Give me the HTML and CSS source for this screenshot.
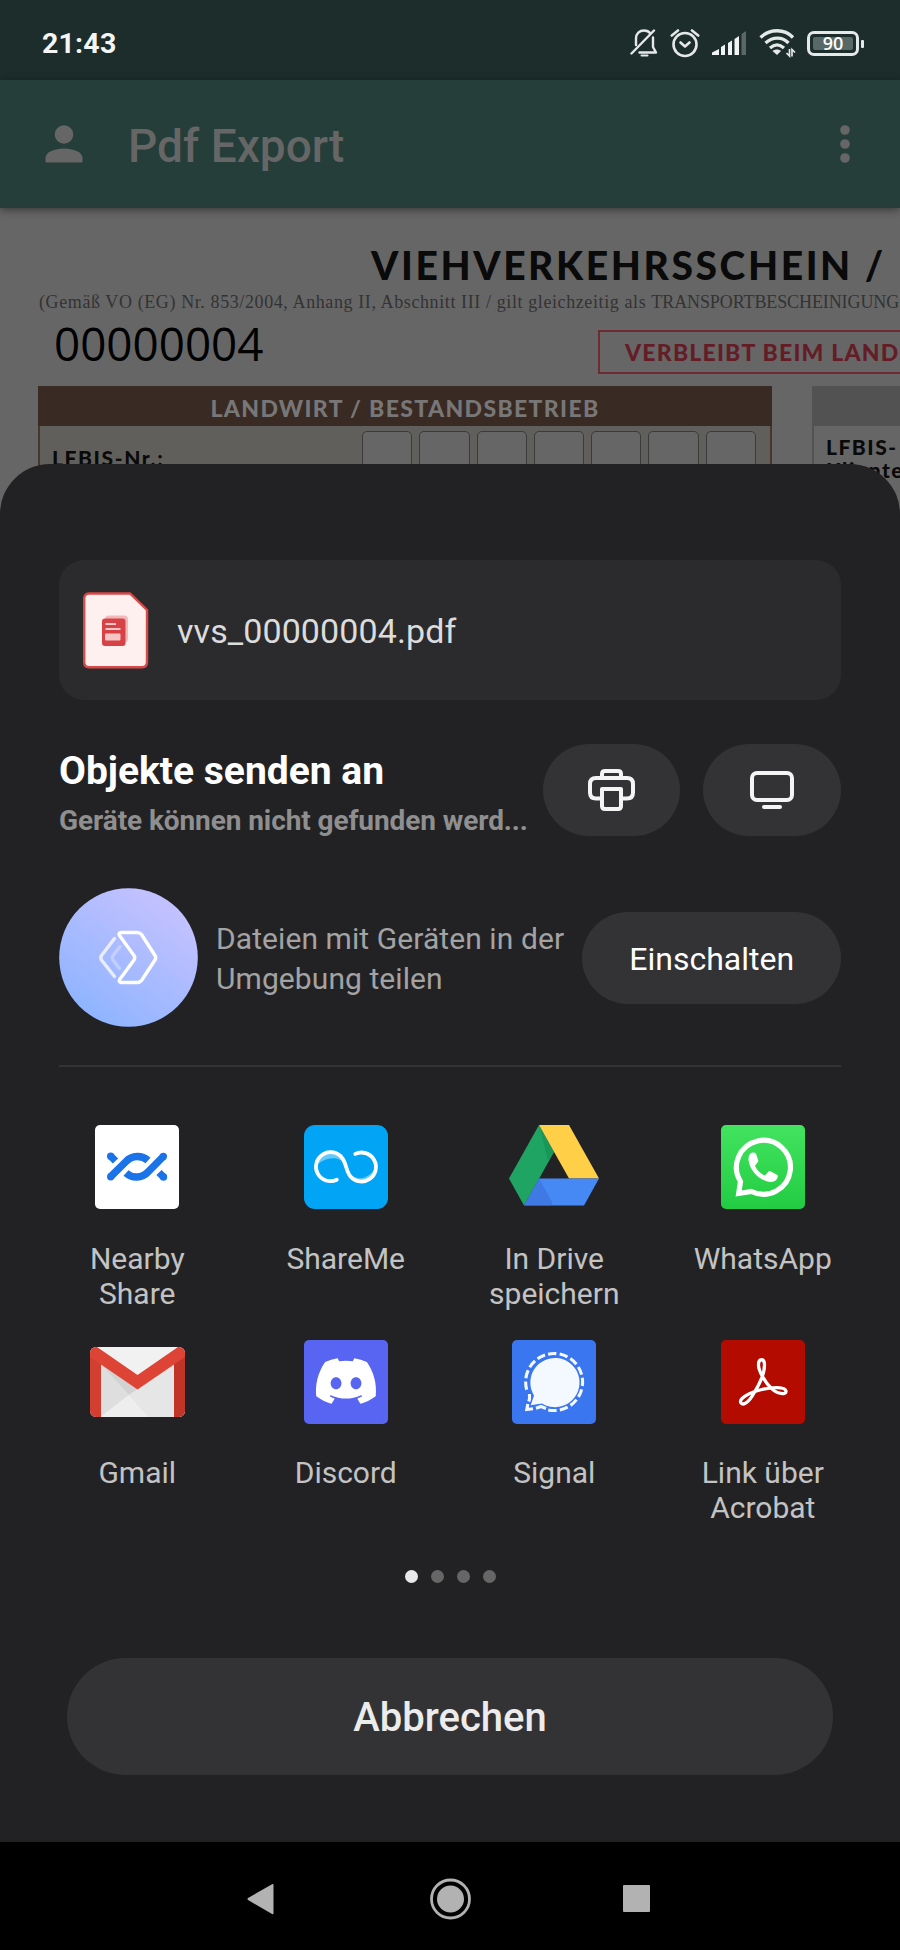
FILE: index.html
```html
<!DOCTYPE html>
<html lang="de">
<head>
<meta charset="utf-8">
<title>Pdf Export</title>
<link rel="stylesheet" href="styles.css">
</head>
<body>
<div class="screen">
  <header class="status">
    <span class="clock">21:43</span>
    <div class="status-icons">
      <svg class="i-bell" width="28" height="30" viewBox="0 0 28 30" fill="none" stroke="#e4e8e7" stroke-width="2.4" stroke-linejoin="round" stroke-linecap="round"><path d="M6 17V10.5C6 5.5 9.500 2.500 14 2.500C17 2.500 19 3.500 20.500 5.500M23 9.500V19L26 24.500H9.500"/><path d="M1.500 25.500L24 2.500"/><path d="M11.500 27.500h6" stroke-width="2"/></svg>
      <svg class="i-alarm" width="30" height="30" viewBox="0 0 30 30" fill="none" stroke="#e4e8e7" stroke-width="2.600" stroke-linecap="round" stroke-linejoin="round"><circle cx="15" cy="16.500" r="11.500"/><path d="M10.500 14.500L15 18.500L19.500 14.500M1.800 7.500L8 2.500M28.200 7.500L22 2.500"/></svg>
      <svg class="i-signal" width="35" height="26" viewBox="0 0 35 26" fill="#f2f4f4"><path d="M0 25V22.500L7 19V25zM9 25V17L13 14.500V25zM16 25V13L20 10.500V25zM22.500 25V9L27 6V25z"/><path d="M29.500 25V4L34 1V25z" fill="#576866"/></svg>
      <svg class="i-wifi" width="37" height="30" viewBox="0 0 37 30" fill="none" stroke="#e4e8e7" stroke-width="3.300"><path d="M1.500 9.500C11 .5 25.500 .5 34 9.500M6.500 15C14 8.500 23 8.500 29.500 15M11 20C15.500 16 20.500 16 25 20"/><path d="M13.500 23C16 21 20 21 22 23L18 27z" fill="#e4e8e7" stroke="none"/><path d="M30.500 21V28L27.500 25M33 28.500V21.500L36 24.500" stroke-width="1.700"/></svg>
      <div class="battery"><span class="charge">90</span></div>
    </div>
  </header>

  <div class="appbar">
    <svg width="38" height="38" viewBox="0 0 38 38" fill="#666"><circle cx="19" cy="9.500" r="9.300"/><path d="M.5 37.500V33C.5 27 10 23.500 19 23.500S37.500 27 37.500 33V37.500z"/></svg>
    <h1>Pdf Export</h1>
    <svg class="more" width="10" height="38" viewBox="0 0 10 38" fill="#666"><circle cx="5" cy="5" r="4.800"/><circle cx="5" cy="19" r="4.800"/><circle cx="5" cy="33" r="4.800"/></svg>
  </div>

  <main class="doc">
    <div class="doc-title">VIEHVERKEHRSSCHEIN /</div>
    <div class="doc-sub">(Gemäß VO (EG) Nr. 853/2004, Anhang II, Abschnitt III / gilt gleichzeitig als <span class="caps">TRANSPORTBESCHEINIGUNG</span></div>
    <div class="doc-row">
      <span class="doc-no">00000004</span>
      <span class="doc-keep">VERBLEIBT BEIM LAND</span>
    </div>
    <div class="doc-tables">
      <section class="farm">
        <div class="farm-head">LANDWIRT / BESTANDSBETRIEB</div>
        <div class="farm-body">
          <span class="field">LFBIS-Nr.:</span>
          <div class="cells"><i></i><i></i><i></i><i></i><i></i><i></i><i></i></div>
        </div>
      </section>
      <section class="client">
        <div class="client-head"></div>
        <div class="client-body">LFBIS-<br>Kliente</div>
      </section>
    </div>
  </main>

  <div class="sheet">
    <div class="file">
      <svg width="66" height="77" viewBox="0 0 66 77"><path d="M6 1.500H47L64 18V70Q64 75.300 59 75.300H6Q1.200 75.300 1.200 70V6.500Q1.200 1.500 6 1.500z" fill="#fff0f0" stroke="#d94949" stroke-width="2.400"/><rect x="22" y="23.500" width="23" height="27" rx="4" fill="#f3b9ba"/><rect x="19" y="26.500" width="23.500" height="27.500" rx="3" fill="#d64245"/><path d="M22.500 32h10.500M22.500 37h15" stroke="#f6c5c5" stroke-width="2"/><rect x="22" y="41.500" width="15.500" height="7" rx="1" fill="#f6c5c5"/></svg>
      <span>vvs_00000004.pdf</span>
    </div>

    <div class="send">
      <div class="send-text">
        <h2>Objekte senden an</h2>
        <p>Geräte können nicht gefunden werd...</p>
      </div>
      <button class="pill printer"><svg width="47" height="42" viewBox="0 0 47 42" fill="none" stroke="#f4f4f4" stroke-width="4" stroke-linejoin="round"><path d="M14 9V5Q14 2 17 2H30Q33 2 33 5V9"/><path d="M12 29.500H8Q2 29.500 2 23.500V15Q2 9 8 9H39Q45 9 45 15V23.500Q45 29.500 39 29.500H35"/><path d="M14 20H33V37Q33 40 30 40H17Q14 40 14 37z"/></svg></button>
      <button class="pill display"><svg width="44" height="39" viewBox="0 0 44 39" fill="none" stroke="#f4f4f4" stroke-width="4" stroke-linecap="round"><rect x="2" y="2" width="40" height="27" rx="5"/><path d="M14 36h16"/></svg></button>
    </div>

    <div class="nearby">
      <svg width="139" height="139" viewBox="0 0 139 139" fill="none" stroke="#fff" stroke-width="3.400" stroke-linecap="round" stroke-linejoin="round"><defs><linearGradient id="orb" x1=".25" y1=".95" x2=".8" y2=".15"><stop stop-color="#8fb4ff"/><stop offset="1" stop-color="#c2c1ff"/></linearGradient></defs><circle cx="69.500" cy="69.500" r="69.300" fill="url(#orb)" stroke="none"/><path d="M62 44.500H78Q81 44.500 82.500 46.500L96 67.500Q97.500 69.700 96 72L82.500 92.500Q81 94.500 78 94.500H62Q59 94 61 91L75 72Q76.500 69.700 75 67.500L60.500 47.500Q59 45 62 44.500z"/><path d="M55.500 50.500L42.500 67.500Q41 69.700 42.500 72L55.500 88.500" opacity=".75"/><path d="M61 58.500L54 67.500Q52.500 69.700 54 72L60.500 80.500" opacity=".3"/></svg>
      <p>Dateien mit Geräten in der<br>Umgebung teilen</p>
      <button class="pill enable">Einschalten</button>
    </div>

    <hr class="rule">

    <div class="apps">
      <div class="app">
        <svg width="84" height="84" viewBox="0 0 84 84"><rect width="84" height="84" rx="5" fill="#fff"/><g fill="none" stroke="#1a73e8" stroke-width="7.400"><path d="M15.700 51.700L31 36.500C37 30 47 30 53 35.500M68.300 31.500L53 47C47 53.500 37 53.500 31 48M15.500 31L20.500 36M64 47.500L69 52.500"/></g><g fill="#1a73e8"><circle cx="15.700" cy="51.700" r="3.700"/><circle cx="68.300" cy="31.500" r="3.700"/><circle cx="15.700" cy="31.200" r="3.700"/><circle cx="68.500" cy="52" r="3.700"/></g></svg>
        <span>Nearby<br>Share</span>
      </div>
      <div class="app">
        <svg width="84" height="84" viewBox="0 0 84 84"><rect width="84" height="84" rx="11" fill="#02a5f5"/><path d="M12 42C12 20 38 21 41 39C34 29 17 33 12 42zM43 44C49 57 64 56 72 42C72 63 48 63 43 44z" fill="#66c9fb"/><path d="M32.800 54.700A14.500 14.500 0 1 1 38.500 33.500C42 38 42.500 47 46.500 51.500A14.500 14.500 0 1 0 51.300 28.900" fill="none" stroke="#fff" stroke-width="3.800" stroke-linecap="round"/></svg>
        <span>ShareMe</span>
      </div>
      <div class="app">
        <svg width="90" height="84" viewBox="0 0 90 84"><path d="M30 0L45 27L15 80.500L0 53.500z" fill="#20a464"/><path d="M30 0L45 27L39 36z" fill="#168f55" opacity=".6"/><path d="M30 0H60L90 53.500H60z" fill="#ffcf48"/><path d="M30 53.500H90L75 80.500H15z" fill="#4688f4"/><path d="M30 53.500L43 77V80.500H15z" fill="#3b70d9" opacity=".6"/></svg>
        <span>In Drive<br>speichern</span>
      </div>
      <div class="app">
        <svg width="84" height="84" viewBox="0 0 84 84"><defs><linearGradient id="wa" x2="0" y2="1"><stop stop-color="#43e35f"/><stop offset="1" stop-color="#22cc42"/></linearGradient></defs><rect width="84" height="84" rx="5" fill="url(#wa)"/><path d="M17.700 68.500L19.500 56.500A27 27 0 1 1 30.500 66.500z" fill="none" stroke="#fff" stroke-width="5.200"/><path d="M32 27.500C29 27.500 27.300 31 27.500 35C28.500 46 40 57 50 57C54 57 57 54 56.800 50.700Q56.500 50 55.500 49.500L49.500 46.200Q48.200 45.700 47.300 46.700L44.500 50Q43.700 50.700 42.500 50C39 48 36 45 34.300 41.500Q34 40.500 34.700 39.800L36.800 37.300Q37.500 36.200 37.200 35.200L35 28.800Q34.500 27.500 32 27.500z" fill="#fff"/></svg>
        <span>WhatsApp</span>
      </div>
      <div class="app">
        <svg width="95" height="84" viewBox="0 -7 95 84"><defs><clipPath id="env"><rect width="95" height="70" rx="6"/></clipPath></defs><g clip-path="url(#env)"><rect width="95" height="70" fill="#e8e8e8"/><path d="M11 17L40 47L11 69z" fill="#dedede"/><path d="M11 17L59 70H95V10L47 42z" fill="#d2d2d2"/><path d="M39 48L47.500 42L84 16V70H58z" fill="#e6e6e6"/><path d="M11 70L39 48L58 70z" fill="#eee"/><path d="M7 0H88L47.500 29z" fill="#f1f1f1"/><path d="M0 8L11 16V70H0z" fill="#d23f31"/><path d="M95 8L84 16V70H95z" fill="#c13528"/><path d="M0 0H7L47.500 28L88 0H95V10L47.500 42.500L0 10z" fill="#de4436"/></g></svg>
        <span>Gmail</span>
      </div>
      <div class="app">
        <svg width="84" height="84" viewBox="0 0 84 84"><rect width="84" height="84" rx="5" fill="#5865f2"/><path transform="translate(12 11) scale(2.5)" fill="#fff" d="M20.317 4.370a19.791 19.791 0 00-4.885-1.515.074.074 0 00-.079.037c-.211.375-.445.865-.608 1.250-1.845-.276-3.680-.276-5.487 0-.164-.393-.406-.874-.618-1.250a.077.077 0 00-.078-.037 19.736 19.736 0 00-4.885 1.515.070.070 0 00-.032.028C.533 9.046-.319 13.580.099 18.058a.082.082 0 00.031.056c2.053 1.508 4.041 2.423 5.993 3.029a.078.078 0 00.084-.028c.462-.630.873-1.295 1.226-1.994a.076.076 0 00-.042-.106c-.653-.248-1.274-.550-1.872-.892a.077.077 0 01-.008-.128c.126-.094.252-.192.372-.291a.074.074 0 01.078-.011c3.928 1.793 8.180 1.793 12.061 0a.074.074 0 01.079.010c.120.099.246.198.373.292a.077.077 0 01-.007.128 12.299 12.299 0 01-1.873.891.077.077 0 00-.041.107c.360.698.772 1.363 1.225 1.993a.076.076 0 00.084.029c1.961-.607 3.950-1.522 6.002-3.029a.077.077 0 00.031-.055c.500-5.177-.838-9.674-3.549-13.660a.061.061 0 00-.031-.029zM8.020 15.331c-1.183 0-2.157-1.086-2.157-2.419 0-1.333.956-2.419 2.157-2.419 1.211 0 2.176 1.095 2.157 2.419 0 1.333-.956 2.419-2.157 2.419zm7.975 0c-1.183 0-2.157-1.086-2.157-2.419 0-1.333.955-2.419 2.157-2.419 1.211 0 2.176 1.095 2.157 2.419 0 1.333-.946 2.419-2.157 2.419z"/></svg>
        <span>Discord</span>
      </div>
      <div class="app">
        <svg width="84" height="84" viewBox="0 0 84 84"><rect width="84" height="84" rx="5" fill="#3a76f0"/><path d="M18.700 65.200L22 55.500A24.600 24.600 0 1 1 30 63.500z" fill="#f4f8ff"/><g fill="none" stroke="#f4f8ff" stroke-width="3.100"><path d="M33.500 69.200A28.500 28.500 0 1 0 17 55.500" pathLength="162" stroke-dasharray="0 3 8.600 3.400 8.600 3.400 8.600 3.400 8.600 3.400 8.600 3.400 8.600 3.400 8.600 3.400 8.600 3.400 8.600 3.400 8.600 3.400 8.600 3.400 8.600 3.400 8.600 3.400"/><path d="M17.500 54V59L16.800 61.500M15.800 64L14.800 69.500L21 68.800M24 68.200L29 66.500L34 68.500"/></g></svg>
        <span>Signal</span>
      </div>
      <div class="app">
        <svg width="84" height="84" viewBox="0 0 84 84"><rect width="84" height="84" rx="5" fill="#b30b00"/><path d="M20 63C17 59 28 52.500 41 49.500C51 47 64 46.500 65 51C65.500 55 56 54.500 50 48C44 42 37.500 31 37.500 25C37.500 18 43.500 18 43.500 25C43.500 34 38 45 33 53C28 62 22.500 66 20 63z" fill="none" stroke="#fff" stroke-width="3.300"/></svg>
        <span>Link über<br>Acrobat</span>
      </div>
    </div>

    <div class="dots"><i class="on"></i><i></i><i></i><i></i></div>
    <button class="cancel">Abbrechen</button>
  </div>

  <nav class="navbar">
    <svg width="406" height="42" viewBox="0 0 406 42" fill="#b2b2b2"><path d="M1 20Q0 21 1 22L25.500 36.200Q26.500 36.500 26.500 35V7Q26.500 5.500 25.500 6z"/><circle cx="203.500" cy="21" r="13.500"/><circle cx="203.500" cy="21" r="19" fill="none" stroke="#b2b2b2" stroke-width="2.800"/><rect x="376" y="7" width="27" height="27" rx="1"/></svg>
  </nav>
</div>
</body>
</html>
```
FILE: styles.css
```css
* { box-sizing: border-box; }
body { margin: 0; background: #000; font-family: Roboto, sans-serif; }
h1, h2, p { margin: 0; }
svg { display: block; flex: none; }
button { border: 0; padding: 0; font-family: inherit; background: #333335; color: #fff; }

.screen { width: 900px; height: 1950px; overflow: hidden; display: flex; flex-direction: column; }

.status { height: 80px; flex: none; background: #1d2d2c; display: flex; align-items: center; justify-content: space-between; padding: 6px 35px 0 42px; }
.clock { font-size: 28.500px; font-weight: 700; color: #f4f6f6; letter-spacing: .2px; }
.status-icons { display: flex; align-items: center; }
.i-alarm { margin-left: 12px; }
.i-signal { margin-left: 12px; }
.i-wifi { margin-left: 12px; }
.battery { margin-left: 11px; width: 52px; height: 25px; border: 3px solid #e4e8e7; border-radius: 7px; padding: 3px; display: flex; margin-right: 6px; position: relative; }
.battery::after { content: ""; position: absolute; left: 51px; top: 6px; width: 3px; height: 8px; border-radius: 1px; background: #e4e8e7; }
.charge { flex: 1; display: flex; align-items: center; justify-content: center; border-radius: 2px; background: #576866; color: #fff; font: 600 18px/1 "Open Sans", sans-serif; }

.appbar { height: 128px; flex: none; background: #253e39; display: flex; align-items: center; padding: 0 50px 0 45px; box-shadow: 0 2px 8px rgba(0, 0, 0, .45); position: relative; }
.appbar h1 { flex: 1; margin-left: 45px; font-size: 46px; font-weight: 500; color: #666; line-height: 60px; padding-top: 3px; }

.doc { height: 312px; flex: none; overflow: hidden; background: #666; font-family: Lato, sans-serif; white-space: nowrap; }
.doc-title { margin: 33px 0 0 371px; font-size: 39px; line-height: 48px; font-weight: 900; color: #0a0a0a; letter-spacing: 2.600px; }
.doc-sub { margin: 1px 0 0 39px; font: 18px/24px "Liberation Serif", serif; color: #333; letter-spacing: .6px; }
.caps { letter-spacing: -.1px; }
.doc-row { display: flex; height: 72px; padding-left: 54px; }
.doc-no { width: 544px; flex: none; font: 45.800px/58px "Open Sans", sans-serif; color: #000; }
.doc-keep { margin-top: 16px; width: 330px; flex: none; height: 44px; border: 2px solid #6f2a33; padding-left: 25px; font-size: 23px; line-height: 41px; font-weight: 900; letter-spacing: 1.200px; color: #641d27; }
.doc-tables { display: flex; gap: 40px; padding-left: 38px; }
.farm { width: 734px; flex: none; }
.farm-head { height: 40px; background: #3a2a24; color: #777; text-align: center; font-size: 23px; line-height: 45px; font-weight: 900; letter-spacing: 1.350px; }
.farm-body { height: 120px; border: 2px solid #4a352d; border-top: 0; background: #615f5b; display: flex; justify-content: space-between; padding: 5px 14px 0 12px; }
.field { font-size: 21px; line-height: 54px; font-weight: 900; letter-spacing: 1.600px; color: #0a0a0a; }
.cells { display: flex; gap: 7px; }
.cells i { width: 50.300px; height: 60px; border: 1px solid #3b3b3b; border-radius: 5px; background: #666; }
.client { width: 120px; flex: none; }
.client-head { height: 40px; background: #525252; }
.client-body { height: 120px; border-left: 2px solid #525252; padding: 9px 0 0 12px; font-size: 21px; line-height: 23px; font-weight: 900; letter-spacing: 1.500px; color: #0a0a0a; }

.sheet { position: relative; height: 1378px; margin-top: -56px; flex: none; background: #222224; border-radius: 50px 50px 0 0; padding: 96px 59px 0; display: flex; flex-direction: column; }
.file { height: 140px; border-radius: 25px; background: #2b2b2d; display: flex; align-items: center; gap: 28px; padding-left: 24px; font-size: 34px; color: #dcdcdc; }
.file span { padding-top: 1px; letter-spacing: .1px; }

.send { margin-top: 44px; height: 92px; display: flex; }
.send-text { width: 484px; white-space: nowrap; }
.send h2 { font-size: 39px; line-height: 46px; padding-top: 4px; color: #fff; font-weight: 700; }
.send p { margin-top: 9px; font-size: 28px; line-height: 36px; font-weight: 700; letter-spacing: -.09px; color: #8f8f90; }
.pill { height: 92px; border-radius: 46px; display: flex; align-items: center; justify-content: center; }
.printer { width: 137px; }
.display { width: 138px; margin-left: 23px; }

.nearby { margin-top: 52px; height: 139px; display: flex; align-items: center; }
.nearby p { margin-left: 18px; width: 367px; padding-top: 2px; font-size: 30px; line-height: 40px; letter-spacing: .08px; color: #a3a3a4; white-space: nowrap; }
.enable { width: 259px; font-size: 32px; padding-top: 3px; }
.rule { width: 100%; margin: 38px 0 0; border: 0; height: 2px; flex: none; background: #333335; }

.apps { margin: 58px -26px 0; display: grid; grid-template-columns: repeat(4, 1fr); grid-template-rows: 215px 215px; }
.app { display: flex; flex-direction: column; align-items: center; gap: 32px; font-size: 30px; line-height: 35px; text-align: center; color: #c3c3c4; white-space: nowrap; }
.app:nth-child(n+5) { gap: 31px; }

.dots { margin-top: 15px; display: flex; justify-content: center; gap: 13px; }
.dots i { width: 13px; height: 13px; border-radius: 50%; background: #666; }
.dots .on { background: #e8e8e8; }
.cancel { margin: 75px 8px 0; height: 117px; border-radius: 59px; font-size: 40px; font-weight: 500; color: #ececec; padding-top: 2px; }

.navbar { flex: 1; background: #000; display: flex; justify-content: center; padding-top: 36px; }
```
